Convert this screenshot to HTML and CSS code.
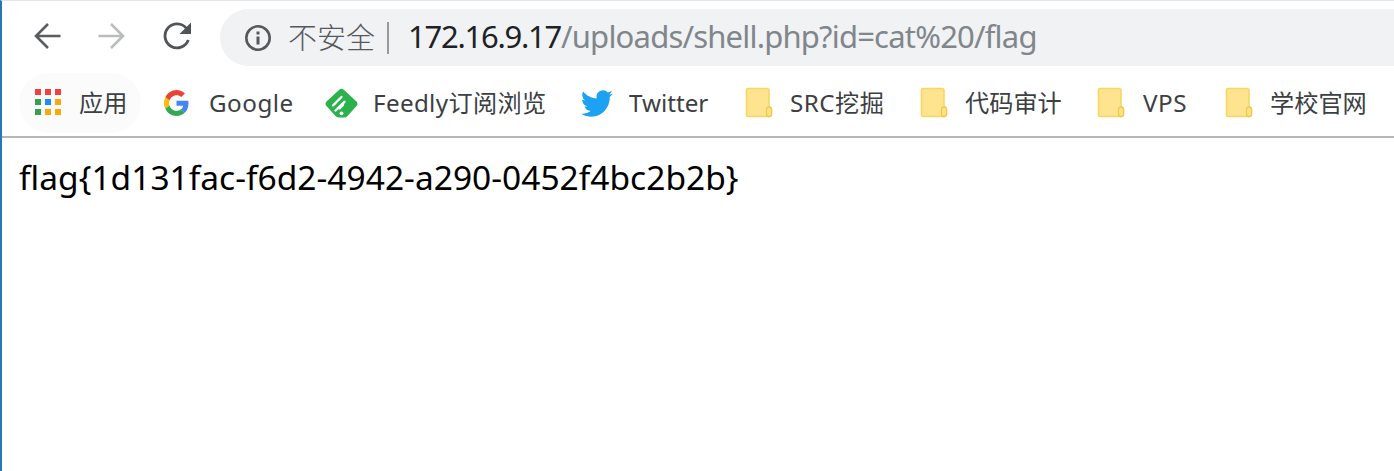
FILE: index.html
```html
<!DOCTYPE html>
<html lang="zh-CN">
<head>
<meta charset="utf-8">
<title>172.16.9.17/uploads/shell.php</title>
<link rel="stylesheet" href="styles.css">
</head>
<body>
<svg class="defs" width="0" height="0">
  <symbol id="folder" viewBox="0 0 28 32">
    <path d="M3 1.500H22Q24 1.500 24 3.500V20Q26.500 20 26.500 23V27.500Q26.500 29.500 24 29.500H3Q1.500 29.500 1.500 28V3Q1.500 1.500 3 1.500Z" fill="#ffe48f" stroke="#f8d665" stroke-width="1.600"/>
    <path d="M24 20Q21.500 20 21.500 23V27Q21.500 29.500 24 29.500Q26.500 29.500 26.500 27V23Q26.500 20 24 20Z" fill="#ffe38a" stroke="#efc84c" stroke-width="1.300"/>
  </symbol>
</svg>
<div class="window">
  <header class="toolbar">
    <nav class="buttons">
      <svg width="28" height="28" viewBox="0 0 28 28" fill="none" stroke="#5a5d61" stroke-width="2.600"><path d="M27.500 14H3M15 2 3 14 15 26"/></svg>
      <svg width="28" height="28" viewBox="0 0 28 28" fill="none" stroke="#b9bbbd" stroke-width="2.600"><path d="M.5 14H25M13 2 25 14 13 26"/></svg>
      <svg width="28" height="28" viewBox="0 0 28 28"><path d="M25.300 18A12 12 0 1 1 23.500 6.500" fill="none" stroke="#505459" stroke-width="2.800"/><path d="M28 .5V12H16.500Z" fill="#505459"/></svg>
    </nav>
    <div class="address">
      <svg class="info" width="28" height="28" viewBox="0 0 28 28"><circle cx="14" cy="14" r="11.700" fill="none" stroke="#55585d" stroke-width="2.600"/><path d="M12.500 7.500h3v3h-3zM12.500 12.500h3v8h-3z" fill="#55585d"/></svg>
      <span class="insecure">不安全</span>
      <span class="divider"></span>
      <span class="url"><span class="host">172.16.9.17</span><span class="path">/uploads/shell.php?id=cat%20/flag</span></span>
    </div>
  </header>
  <nav class="bookmarks">
    <a class="item apps"><svg width="28" height="28" viewBox="0 0 28 28"><path d="M1 0h6v6H1zM11 0h6v6h-6zM21 0h6v6h-6z" fill="#f3403c"/><path d="M1 10h6v6H1zM1 20h6v6H1z" fill="#34a050"/><path d="M11 10h6v6h-6z" fill="#1a8cff"/><path d="M21 10h6v6h-6zM11 20h6v6h-6zM21 20h6v6h-6z" fill="#fca908"/></svg><span>应用</span></a>
    <a class="item google"><svg width="25" height="26" viewBox="0 0 48 48" preserveAspectRatio="none"><path fill="#ea4335" d="M24 9.500c3.540 0 6.710 1.220 9.210 3.600l6.850-6.850C35.900 2.380 30.470 0 24 0 14.620 0 6.510 5.380 2.560 13.220l7.980 6.190C12.430 13.720 17.740 9.500 24 9.500z"/><path fill="#4285f4" d="M46.980 24.550c0-1.570-.15-3.090-.38-4.550H24v9.020h12.940c-.58 2.960-2.260 5.480-4.780 7.180l7.730 6c4.510-4.180 7.090-10.360 7.090-17.650z"/><path fill="#fbbc05" d="M10.530 28.590A14.500 14.500 0 0 1 10.530 19.410l-7.980-6.190a24 24 0 0 0 0 21.560z"/><path fill="#34a853" d="M24 48c6.480 0 11.930-2.130 15.890-5.810l-7.730-6c-2.150 1.450-4.920 2.300-8.160 2.300-6.260 0-11.570-4.220-13.470-9.910l-7.980 6.190C6.510 42.620 14.620 48 24 48z"/></svg><span>Google</span></a>
    <a class="item feedly"><svg width="33" height="30" viewBox="0 0 33 30"><path d="M14 2Q16.500-.5 19 2L31.500 13.500Q33.500 16 31.500 18L22.500 28Q21.200 29.500 19 29.500H14Q12 29.500 10.500 28L1.500 18Q-.5 16 1.500 13.500Z" fill="#2bb24c"/><path d="M8 17.500 16.500 9M10.500 22.500 19.500 13.800M14.500 20.500 18 17" stroke="#fff" stroke-width="2.400" stroke-linecap="round" fill="none"/><circle cx="16.500" cy="25.300" r="1.900" fill="#fff"/></svg><span>Feedly订阅浏览</span></a>
    <a class="item twitter"><svg width="32" height="27" viewBox="0 2 24 20" preserveAspectRatio="none"><path fill="#1da1f2" d="M23.950 4.570a10 10 0 0 1-2.820.77 4.960 4.960 0 0 0 2.160-2.720c-.95.550-2 .96-3.120 1.180a4.920 4.920 0 0 0-8.380 4.480C7.690 8.090 4.070 6.130 1.640 3.160a4.930 4.930 0 0 0 1.520 6.570 4.900 4.900 0 0 1-2.230-.61v.06a4.920 4.920 0 0 0 3.950 4.830 5 5 0 0 1-2.210.08 4.940 4.940 0 0 0 4.600 3.420A9.870 9.870 0 0 1 0 19.540a13.990 13.990 0 0 0 7.550 2.210c9.050 0 14-7.500 14-13.990 0-.21 0-.42-.02-.63a9.940 9.940 0 0 0 2.420-2.560z"/></svg><span>Twitter</span></a>
    <a class="item src"><svg width="28" height="32"><use href="#folder"/></svg><span>SRC挖掘</span></a>
    <a class="item audit"><svg width="28" height="32"><use href="#folder"/></svg><span>代码审计</span></a>
    <a class="item vps"><svg width="28" height="32"><use href="#folder"/></svg><span>VPS</span></a>
    <a class="item school"><svg width="28" height="32"><use href="#folder"/></svg><span>学校官网</span></a>
  </nav>
  <main class="page">flag{1d131fac-f6d2-4942-a290-0452f4bc2b2b}</main>
</div>
</body>
</html>
```
FILE: styles.css
```css
* { box-sizing: border-box; }
body {
  margin: 0;
  height: 471px;
  overflow: hidden;
  background: #fff;
  font-family: "Noto Sans", "Noto Sans CJK SC", sans-serif;
}
.defs { display: block; }
.window {
  height: 471px;
  border-left: 2px solid #2478b8;
  border-top: 1px solid #e4e5ec;
}
.toolbar {
  display: flex;
  height: 72px;
  padding-top: 8px;
}
.buttons {
  display: flex;
  gap: 37px;
  width: 218px;
  padding: 13px 0 0 31px;
}
.address {
  display: flex;
  flex: 1;
  align-items: center;
  height: 57px;
  padding-left: 24px;
  border-radius: 29px 0 0 29px;
  background: #f0f2f3;
  white-space: nowrap;
}
.info, .divider { flex: none; }
.insecure {
  flex: 0 0 115px;
  padding: 0 0 3px 16px;
  font: 300 29px/53px "Noto Sans CJK SC", sans-serif;
  color: #55595d;
}
.divider {
  width: 2px;
  height: 32px;
  margin-right: 19px;
  background: #97999c;
}
.url {
  padding-bottom: 3px;
  font-size: 31px;
  line-height: 53px;
}
.host { color: #202124; letter-spacing: -1.250px; }
.path { color: #80868b; letter-spacing: -0.800px; }
.bookmarks {
  display: grid;
  grid-template-columns: 130px 161px 256px 164px 175px 177px 128px 1fr;
  height: 65px;
  padding-left: 32px;
  border-bottom: 2px solid #b7b7b7;
  white-space: nowrap;
}
.item {
  display: grid;
  grid-template-columns: 45px auto;
  align-items: center;
  justify-content: start;
  height: 60px;
  font-size: 24.200px;
  line-height: 60px;
  color: #3c4043;
}
.item svg { display: block; }
.apps {
  width: 122px;
  margin-left: -15px;
  padding-left: 15px;
  border-radius: 30px;
  background: #fbfbfb;
}
.google { letter-spacing: 0.500px; }
.feedly { letter-spacing: 0.350px; }
.src { letter-spacing: 0.500px; }
.vps { grid-template-columns: 46px auto; letter-spacing: 0.500px; }
.feedly, .twitter { grid-template-columns: 48px auto; }
.page {
  padding: 15px 0 0 17px;
  font-size: 33.500px;
  line-height: 48px;
  letter-spacing: 0.020px;
  color: #000;
}
```
